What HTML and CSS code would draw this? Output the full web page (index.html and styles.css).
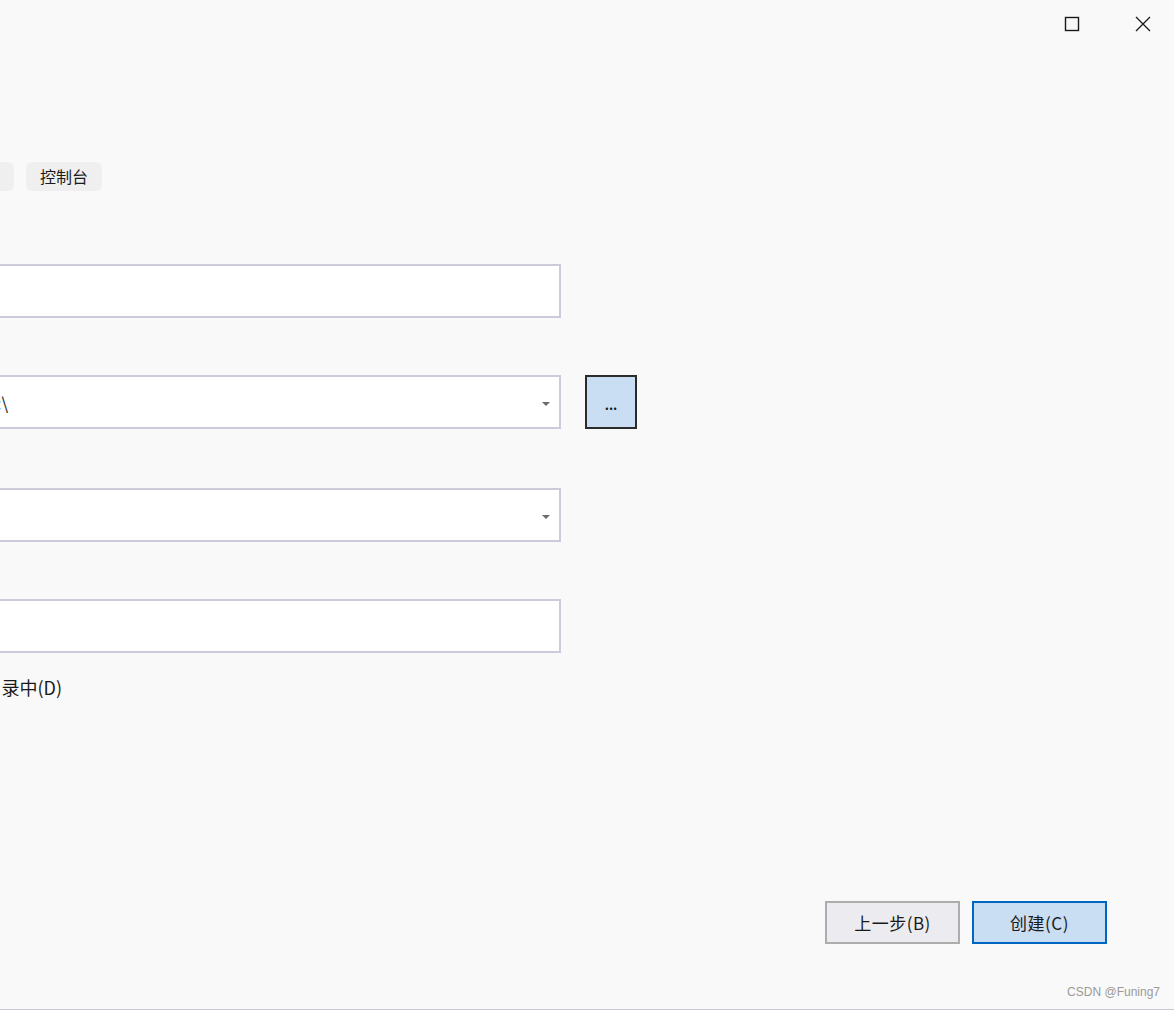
FILE: index.html
```html
<!DOCTYPE html>
<html lang="zh-CN">
<head>
<meta charset="utf-8">
<link rel="stylesheet" href="styles.css">
</head>
<body>
<div class="window">
  <div class="titlebar">
    <button class="winbtn" aria-label="最大化">
      <svg width="16" height="16" viewBox="0 0 16 16"><rect x="1.5" y="1.5" width="13" height="13" fill="none" stroke="#1a1a1a" stroke-width="1.4"/></svg>
    </button>
    <button class="winbtn" aria-label="关闭">
      <svg width="16" height="16" viewBox="0 0 16 16"><path d="M1 1 L15 15 M15 1 L1 15" stroke="#1a1a1a" stroke-width="1.3" fill="none"/></svg>
    </button>
  </div>
  <div class="content">
    <div class="chips">
      <span class="chip chip-cut">Windows</span>
      <span class="chip">控制台</span>
    </div>
    <div class="form">
      <div class="field">
        <div class="box"><span class="val"></span></div>
      </div>
      <div class="field row">
        <div class="box select"><span class="val val-path">C:\</span><span class="caret"></span></div>
        <button class="browse">...</button>
      </div>
      <div class="field">
        <div class="box select"><span class="val"></span><span class="caret"></span></div>
      </div>
      <div class="field last">
        <div class="box"><span class="val"></span></div>
      </div>
      <div class="check"><span>将解决方案和项目放在同一目录中(D)</span></div>
    </div>
  </div>
  <div class="footer">
    <button class="btn btn-back">上一步(B)</button>
    <button class="btn btn-create">创建(C)</button>
  </div>
  <div class="watermark">CSDN @Funing7</div>
</div>
</body>
</html>
```
FILE: styles.css
```css
html, body {
  margin: 0;
  padding: 0;
}
body {
  background: #f9f9f9;
  font-family: "Noto Sans CJK SC", "Noto Sans", sans-serif;
  color: #1a1a1a;
  width: 1174px;
  height: 1010px;
  overflow: hidden;
}
.window {
  position: relative;
  height: 1009px;
  border-bottom: 1px solid #c8c8d2;
  display: flex;
  flex-direction: column;
}
.titlebar {
  height: 48px;
  display: flex;
  justify-content: flex-end;
  align-items: flex-start;
  gap: 9px;
}
.winbtn {
  width: 62px;
  height: 48px;
  border: 0;
  background: transparent;
  padding: 0;
  display: flex;
  align-items: center;
  justify-content: center;
}
.winbtn svg { display: block; }
.content {
  flex: 1;
  overflow: hidden;
}
.chips {
  display: flex;
  gap: 12px;
  margin-top: 114px;
  margin-left: -60px;
}
.chip {
  height: 29px;
  box-sizing: border-box;
  padding: 0 14px;
  background: #efefef;
  border-radius: 6px;
  font-size: 16px;
  line-height: 29px;
  color: #1a1a1a;
}
.chip-cut {
  width: 74px;
  color: transparent;
}
.form {
  margin-left: -40px;
  margin-top: 73px;
  width: 601px;
}
.field {
  height: 54px;
  margin-bottom: 57px;
  display: flex;
}
.field.row {
  width: 677px;
  margin-bottom: 59px;
}
.box {
  flex: 1;
  height: 54px;
  box-sizing: border-box;
  background: #ffffff;
  border: 2px solid #cbcbdb;
  position: relative;
  display: flex;
  align-items: center;
  padding-left: 27px;
  font-size: 17px;
}
.row .box { flex: 0 0 601px; }
.val-path {
  margin-left: -3px;
}
.caret {
  position: absolute;
  right: 9px;
  top: 25px;
  width: 0;
  height: 0;
  border-left: 4px solid transparent;
  border-right: 4px solid transparent;
  border-top: 4px solid #6b6b6b;
}
.browse {
  flex: 0 0 52px;
  margin-left: 24px;
  width: 52px;
  height: 54px;
  box-sizing: border-box;
  background: #c9ddf3;
  border: 2px solid #2b2b2b;
  font-family: "Noto Sans CJK SC", sans-serif;
  font-size: 13px;
  font-weight: bold;
  color: #1a1a1a;
  padding: 4px 0 0 0;
  line-height: 1;
}
.check {
  margin-top: -35px;
  font-size: 18px;
  line-height: 24px;
  white-space: nowrap;
  width: 102px;
  overflow: hidden;
  display: flex;
  justify-content: flex-end;
}
.check span { flex-shrink: 0; }
.footer {
  position: absolute;
  top: 901px;
  left: 825px;
  display: flex;
  gap: 12px;
}
.btn {
  width: 135px;
  height: 43px;
  box-sizing: border-box;
  font-family: "Noto Sans CJK SC", sans-serif;
  font-size: 17px;
  letter-spacing: 0.5px;
  color: #1a1a1a;
  padding: 0;
}
.btn-back {
  background: #ececf0;
  border: 2px solid #adadad;
}
.btn-create {
  background: #c9ddf3;
  border: 2px solid #0067c0;
}
.watermark {
  position: absolute;
  right: 14px;
  top: 985px;
  font-family: "Liberation Sans", sans-serif;
  font-size: 12px;
  color: #9a9a9a;
}
```
